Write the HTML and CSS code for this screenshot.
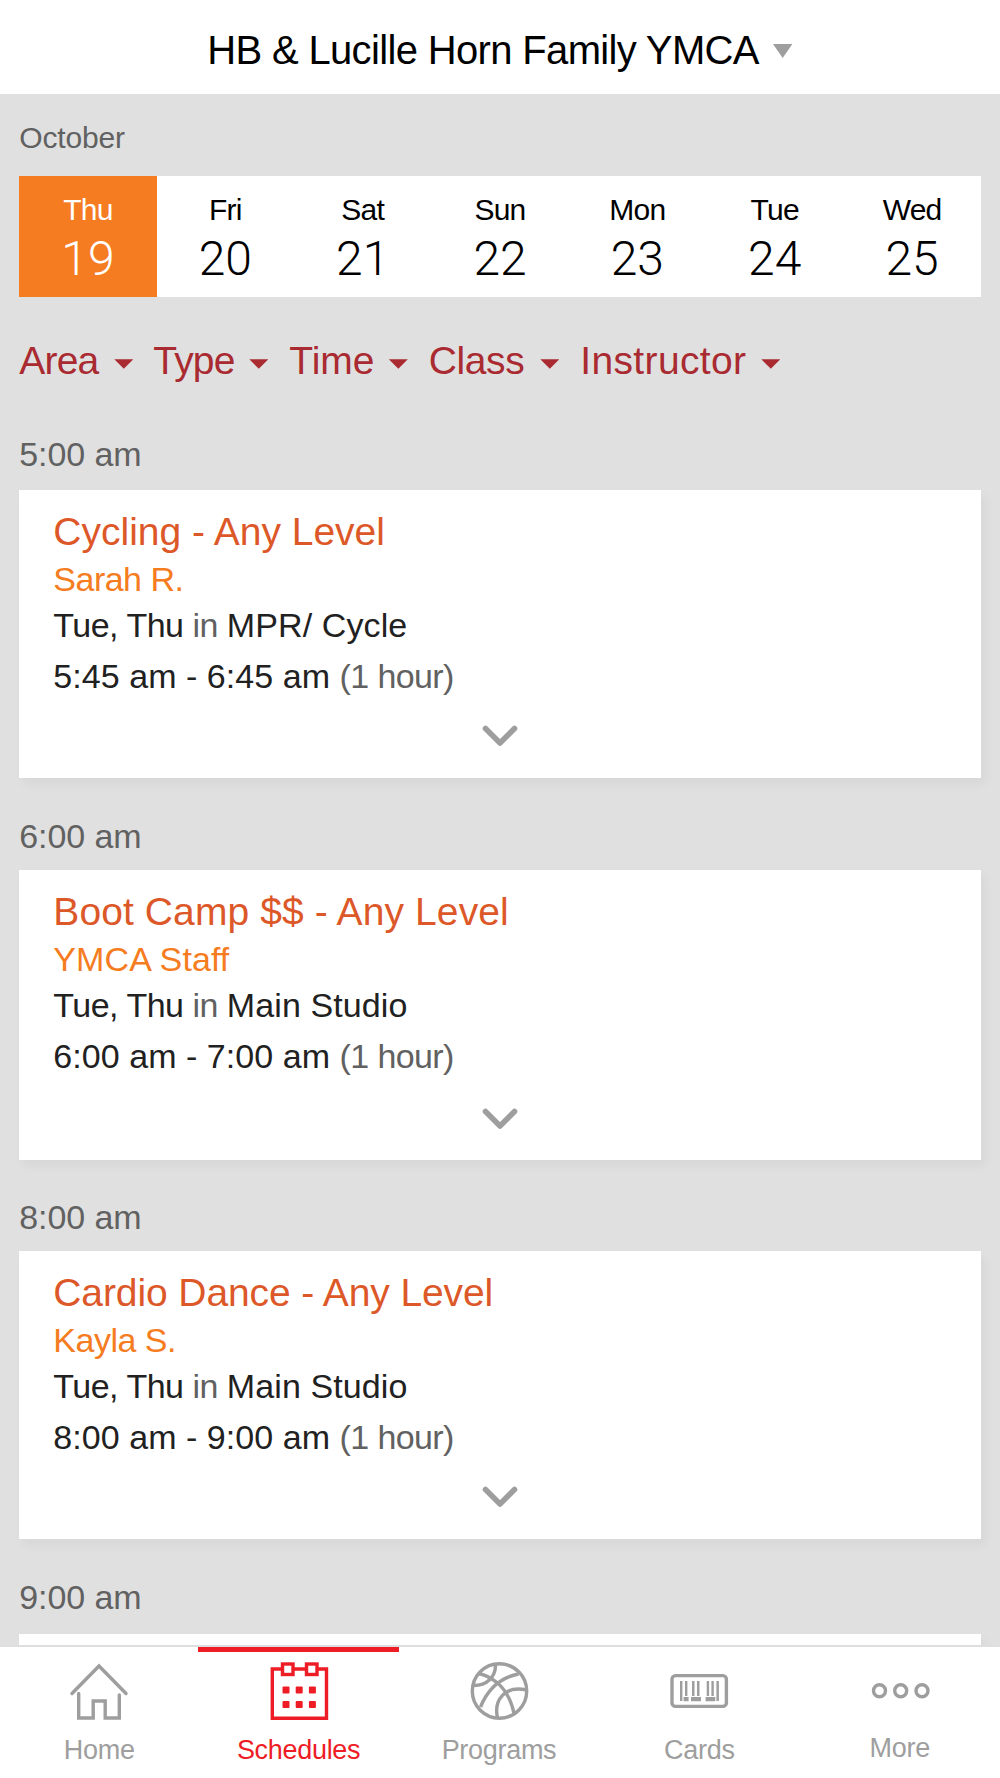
FILE: index.html
```html
<!DOCTYPE html>
<html lang="en">
<head>
<meta charset="utf-8">
<title>Schedules</title>
<link rel="stylesheet" href="styles.css">
</head>
<body>
<div class="app">
  <header class="header">
    <h1 class="branch">HB &amp; Lucille Horn Family YMCA</h1>
    <svg class="branch-arrow" viewBox="0 0 20 14"><path d="M0 0H19.400L9.700 14Z"/></svg>
  </header>

  <main class="content">
    <div class="month">October</div>
    <div class="week">
      <div class="day day-active"><span class="day-name">Thu</span><span class="day-num">19</span></div>
      <div class="day"><span class="day-name">Fri</span><span class="day-num">20</span></div>
      <div class="day"><span class="day-name">Sat</span><span class="day-num">21</span></div>
      <div class="day"><span class="day-name">Sun</span><span class="day-num">22</span></div>
      <div class="day"><span class="day-name">Mon</span><span class="day-num">23</span></div>
      <div class="day"><span class="day-name">Tue</span><span class="day-num">24</span></div>
      <div class="day"><span class="day-name">Wed</span><span class="day-num">25</span></div>
    </div>

    <div class="filters">
      <div class="filter filter-tight">Area<i class="caret"></i></div>
      <div class="filter filter-tight">Type<i class="caret"></i></div>
      <div class="filter">Time<i class="caret"></i></div>
      <div class="filter">Class<i class="caret"></i></div>
      <div class="filter filter-wide">Instructor<i class="caret"></i></div>
    </div>

    <section class="slot">
      <h2 class="slot-time">5:00 am</h2>
      <article class="card">
        <h3 class="class-name">Cycling - Any Level</h3>
        <div class="coach">Sarah R.</div>
        <div class="place"><span class="days">Tue, Thu <span class="muted">in</span> </span>MPR/ Cycle</div>
        <div class="hours">5:45 am - 6:45 am <span class="muted">(1 hour)</span></div>
        <svg class="chevron" viewBox="0 0 36 22"><path d="M3.500 3.500L18 18L32.500 3.500"/></svg>
      </article>
    </section>

    <section class="slot">
      <h2 class="slot-time slot-time-near">6:00 am</h2>
      <article class="card card-tall">
        <h3 class="class-name class-name-wide">Boot Camp $$ - Any Level</h3>
        <div class="coach coach-staff">YMCA Staff</div>
        <div class="place"><span class="days">Tue, Thu <span class="muted">in</span> </span>Main Studio</div>
        <div class="hours">6:00 am - 7:00 am <span class="muted">(1 hour)</span></div>
        <svg class="chevron" viewBox="0 0 36 22"><path d="M3.500 3.500L18 18L32.500 3.500"/></svg>
      </article>
    </section>

    <section class="slot">
      <h2 class="slot-time slot-time-near">8:00 am</h2>
      <article class="card">
        <h3 class="class-name class-name-tight">Cardio Dance - Any Level</h3>
        <div class="coach">Kayla S.</div>
        <div class="place"><span class="days">Tue, Thu <span class="muted">in</span> </span>Main Studio</div>
        <div class="hours">8:00 am - 9:00 am <span class="muted">(1 hour)</span></div>
        <svg class="chevron" viewBox="0 0 36 22"><path d="M3.500 3.500L18 18L32.500 3.500"/></svg>
      </article>
    </section>

    <section class="slot">
      <h2 class="slot-time">9:00 am</h2>
      <article class="card"></article>
    </section>
  </main>

  <nav class="tabs">
    <a class="tab">
      <svg class="icon" viewBox="0 0 64 64">
        <path class="round" d="M6 34.500L33 7L60 34.500M12.700 34.500V59H27.200V42H39.200V59H53.300V36"/>
      </svg>
      <span class="tab-label tab-label-home">Home</span>
    </a>
    <a class="tab tab-active">
      <svg class="icon" viewBox="0 0 64 64">
        <path d="M15.500 10H5.300V59.200H59.500V10H49M26 10H38.500"/>
        <rect x="15.500" y="5" width="10.500" height="10.500"/>
        <rect x="39.500" y="5" width="10.500" height="10.500"/>
        <g class="solid">
          <rect x="15.500" y="27.500" width="7" height="7" rx="1"/><rect x="28.700" y="27.500" width="7" height="7" rx="1"/><rect x="41.900" y="27.500" width="7" height="7" rx="1"/>
          <rect x="15.500" y="42" width="7" height="7" rx="1"/><rect x="28.700" y="42" width="7" height="7" rx="1"/><rect x="41.900" y="42" width="7" height="7" rx="1"/>
        </g>
      </svg>
      <span class="tab-label">Schedules</span>
    </a>
    <a class="tab">
      <svg class="icon" viewBox="0 0 64 64">
        <circle cx="32.500" cy="32" r="27.200"/>
        <path d="M28.500 5C29 18 20 27 5.500 26.500M12 14.500C29 19 42.500 32 47 54.500M13.500 48C20 32 31 19 51.500 15M30.500 59C26.500 41 38 26 59.500 31"/>
      </svg>
      <span class="tab-label">Programs</span>
    </a>
    <a class="tab">
      <svg class="icon" viewBox="0 0 64 64">
        <rect x="5" y="16.600" width="54.400" height="30.800" rx="3.500"/>
        <g class="solid">
          <path d="M13 22h2.400v20H13zM18 22h2.400v15H18zM25 22h2.500v15H25zM30 22h2.500v15H30zM39.700 22h2.400v15h-2.400zM44.400 22h2.400v15h-2.400zM49.400 22h2.500v20h-2.500z"/>
          <path d="M16.600 38h5v4.300h-5zM24 38h10v4.300H24zM38.600 38h9.700v4.300h-9.700z"/>
        </g>
      </svg>
      <span class="tab-label">Cards</span>
    </a>
    <a class="tab tab-more">
      <svg class="icon" viewBox="0 0 64 64">
        <circle cx="11.500" cy="31.800" r="6"/><circle cx="32.700" cy="31.800" r="6"/><circle cx="54" cy="31.800" r="6"/>
      </svg>
      <span class="tab-label">More</span>
    </a>
  </nav>
</div>
</body>
</html>
```

FILE: styles.css
```css
* { box-sizing: border-box; margin: 0; padding: 0; }

body {
  font-family: "Liberation Sans", Arial, sans-serif;
  font-weight: 400;
  background: #e0e0e0;
}

h1, h2, h3 { font-weight: 400; }

.app {
  display: flex;
  flex-direction: column;
  width: 1000px;
  height: 1778px;
  overflow: hidden;
}

/* Branch picker */
.header {
  display: flex;
  flex: none;
  align-items: center;
  justify-content: center;
  gap: 14px;
  height: 94px;
  padding-top: 5px;
  background: #fff;
}
.branch {
  font-size: 40px;
  line-height: 48px;
  letter-spacing: -0.650px;
  color: #000;
}
.branch-arrow { width: 20px; height: 14px; margin-top: 2px; fill: #9e9e9e; }

.content {
  flex: 1;
  min-height: 0;
  padding: 0 19.300px;
  overflow: hidden;
}

/* Week strip */
.month {
  height: 82px;
  padding-top: 26px;
  font-size: 30px;
  line-height: 36px;
  letter-spacing: -0.150px;
  color: #616161;
}
.week {
  display: grid;
  grid-template-columns: repeat(7, 1fr);
  height: 121px;
  background: #fff;
}
.day {
  display: flex;
  flex-direction: column;
  align-items: center;
  padding-top: 16px;
  color: #000;
}
.day-active { background: #f57c20; color: #fff; }
.day-name { font-size: 30px; line-height: 36px; letter-spacing: -0.800px; }
.day-num { font-family: Roboto, sans-serif; font-weight: 300; font-size: 48px; line-height: 56px; margin-top: 3px; }

/* Filter menus */
.filters {
  display: flex;
  gap: 20px;
  height: 136.500px;
  padding-top: 40px;
  font-size: 39px;
  line-height: 48px;
  color: #a92b31;
}
.filter {
  display: flex;
  align-items: center;
  justify-content: space-between;
  height: 48px;
}
.filter:nth-child(1) { width: 114px; }
.filter:nth-child(2) { width: 115px; }
.filter:nth-child(3) { width: 119.500px; padding-left: 1px; }
.filter:nth-child(4) { width: 131.500px; padding-left: 1px; letter-spacing: -0.400px; }
.filter:nth-child(5) { width: 201px; padding-left: 1px; }
.filter-tight { letter-spacing: -0.800px; }
.filter-wide { letter-spacing: 0.350px; }
.caret {
  width: 19px;
  height: 9.500px;
  margin-top: 6px;
  background: currentColor;
  clip-path: polygon(0 0, 100% 0, 50% 100%);
}

/* Time slots */
.slot-time {
  height: 56.800px;
  font-size: 34px;
  line-height: 40px;
  letter-spacing: -0.100px;
  color: #616161;
}
.slot-time-near { height: 54px; }
.slot + .slot { padding-top: 37.700px; }
.card {
  display: flex;
  flex-direction: column;
  height: 287.700px;
  padding: 18px 34px 0;
  background: #fff;
  box-shadow: 4px 6px 10px rgba(0, 0, 0, 0.045);
  font-size: 34px;
  color: #212121;
}
.card-tall { height: 290px; }
.class-name {
  font-size: 39px;
  line-height: 48px;
  color: #dd5828;
}
.class-name-wide { letter-spacing: 0.100px; }
.class-name-tight { letter-spacing: -0.100px; }
.coach { line-height: 40px; margin-top: 3px; letter-spacing: -0.500px; color: #f57c20; }
.coach-staff { letter-spacing: 0.100px; }
.place { line-height: 40px; margin-top: 6px; letter-spacing: 0.100px; }
.days { letter-spacing: -0.500px; }
.hours { line-height: 40px; margin-top: 11px; letter-spacing: 0.050px; }
.hours .muted { letter-spacing: -0.600px; }
.muted { color: #616161; }
.chevron {
  flex: none;
  align-self: center;
  width: 36px;
  height: 22px;
  margin-top: 29px;
  fill: none;
  stroke: #9e9e9e;
  stroke-width: 5.600;
  stroke-linecap: round;
  stroke-linejoin: round;
}
.card-tall .chevron { margin-top: 32px; }

/* Bottom tab bar */
.tabs {
  display: grid;
  grid-template-columns: repeat(5, 200.400px);
  flex: none;
  height: 133px;
  margin-left: -2px;
  border-top: 2px solid #dedede;
  background: #fff;
}
.tab {
  display: flex;
  flex-direction: column;
  align-items: center;
  padding-top: 7px;
  border-top: 5px solid transparent;
  color: #9e9e9e;
}
.tab-active { border-top-color: #ee1c25; color: #ee1c25; }
.icon {
  width: 64px;
  height: 64px;
  fill: none;
  stroke: currentColor;
  stroke-width: 3.400;
}
.icon .round { stroke-linecap: round; }
.icon .solid { fill: currentColor; stroke: none; }
.tab-label {
  font-size: 27px;
  line-height: 32px;
  margin-top: 11px;
  letter-spacing: -0.300px;
}
.tab-label-home { padding-left: 2px; }
.tab-more .tab-label { margin-top: 9px; }
```
